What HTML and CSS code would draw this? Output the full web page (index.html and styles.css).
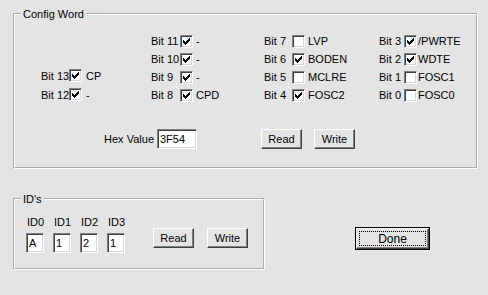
FILE: index.html
```html
<!DOCTYPE html>
<html lang="en">
<head>
    <meta charset="UTF-8">
    <meta name="viewport" content="width=device-width, initial-scale=1.0">
    <title>Config Word</title>
    <link rel="stylesheet" href="styles.css">
</head>
<body>
    <svg class="sprite" xmlns="http://www.w3.org/2000/svg">
        <symbol id="tick" viewBox="0 0 11 11">
            <rect x="2" y="4" width="1" height="3"/>
            <rect x="3" y="5" width="1" height="3"/>
            <rect x="4" y="6" width="1" height="3"/>
            <rect x="5" y="5" width="1" height="3"/>
            <rect x="6" y="4" width="1" height="3"/>
            <rect x="7" y="3" width="1" height="3"/>
            <rect x="8" y="2" width="1" height="3"/>
        </symbol>
    </svg>

    <div class="dialog">
        <fieldset class="group config">
            <legend>Config Word</legend>
            <div class="bits">
                <div class="bit-col col-a">
                    <div class="bit"><span class="bit-name">Bit 13</span><span class="box"><svg><use href="#tick"/></svg></span><span class="bit-label">CP</span></div>
                    <div class="bit"><span class="bit-name">Bit 12</span><span class="box"><svg><use href="#tick"/></svg></span><span class="bit-label">-</span></div>
                </div>
                <div class="bit-col col-b">
                    <div class="bit"><span class="bit-name">Bit 11</span><span class="box"><svg><use href="#tick"/></svg></span><span class="bit-label">-</span></div>
                    <div class="bit"><span class="bit-name">Bit 10</span><span class="box"><svg><use href="#tick"/></svg></span><span class="bit-label">-</span></div>
                    <div class="bit"><span class="bit-name">Bit 9</span><span class="box"><svg><use href="#tick"/></svg></span><span class="bit-label">-</span></div>
                    <div class="bit"><span class="bit-name">Bit 8</span><span class="box"><svg><use href="#tick"/></svg></span><span class="bit-label">CPD</span></div>
                </div>
                <div class="bit-col col-c">
                    <div class="bit"><span class="bit-name">Bit 7</span><span class="box"></span><span class="bit-label">LVP</span></div>
                    <div class="bit"><span class="bit-name">Bit 6</span><span class="box"><svg><use href="#tick"/></svg></span><span class="bit-label">BODEN</span></div>
                    <div class="bit"><span class="bit-name">Bit 5</span><span class="box"></span><span class="bit-label">MCLRE</span></div>
                    <div class="bit"><span class="bit-name">Bit 4</span><span class="box"><svg><use href="#tick"/></svg></span><span class="bit-label">FOSC2</span></div>
                </div>
                <div class="bit-col col-d">
                    <div class="bit"><span class="bit-name">Bit 3</span><span class="box"><svg><use href="#tick"/></svg></span><span class="bit-label">/PWRTE</span></div>
                    <div class="bit"><span class="bit-name">Bit 2</span><span class="box"><svg><use href="#tick"/></svg></span><span class="bit-label">WDTE</span></div>
                    <div class="bit"><span class="bit-name">Bit 1</span><span class="box"></span><span class="bit-label">FOSC1</span></div>
                    <div class="bit"><span class="bit-name">Bit 0</span><span class="box"></span><span class="bit-label">FOSC0</span></div>
                </div>
            </div>
            <div class="hex-row">
                <span class="hex-label">Hex Value</span>
                <input class="field hex" type="text" value="3F54">
                <button class="btn hex-read">Read</button>
                <button class="btn btn-next">Write</button>
            </div>
        </fieldset>

        <div class="lower">
            <fieldset class="group ids">
                <legend>ID's</legend>
                <div class="id-row">
                    <div class="id-col"><span class="id-name">ID0</span><input class="field id" type="text" value="A"></div>
                    <div class="id-col"><span class="id-name">ID1</span><input class="field id" type="text" value="1"></div>
                    <div class="id-col"><span class="id-name">ID2</span><input class="field id" type="text" value="2"></div>
                    <div class="id-col"><span class="id-name">ID3</span><input class="field id" type="text" value="1"></div>
                    <button class="btn id-read">Read</button>
                    <button class="btn id-write">Write</button>
                </div>
            </fieldset>
            <button class="btn done"><span class="focus">Done</span></button>
        </div>
    </div>
</body>
</html>
```

FILE: styles.css
```css
body {
    margin: 0;
    background-color: #e4e4e4;
    font-family: "Liberation Sans", Arial, sans-serif;
    font-size: 11px;
    line-height: 12px;
    color: #000000;
}

.sprite {
    display: none;
}

.dialog {
    padding: 8px 0 0 13px;
}

/* etched group box */
.group {
    margin: 0;
    min-width: 0;
    border: 2px groove #ffffff;
    box-sizing: border-box;
}

.group legend {
    padding: 0 2px;
    margin-left: 6px;
    line-height: 12px;
}

.config {
    width: 465px;
    padding: 12px 0 18px 0;
}

.bits {
    display: grid;
    grid-template-columns: 110px 113px 115px 1fr;
    margin-left: 26px;
}

.bit {
    display: flex;
    align-items: center;
    height: 18px;
    white-space: nowrap;
}

.col-a {
    padding-top: 34px;
}
.col-a .bit {
    height: 19px;
}

.bit-name {
    width: 28px;
}
.col-b .bit-name {
    width: 29px;
}
.col-d .bit-name {
    width: 25px;
}

.box {
    width: 13px;
    height: 13px;
    box-sizing: border-box;
    background-color: #ffffff;
    border: 1px solid;
    border-color: #808080 #ffffff #ffffff #808080;
    box-shadow: inset 1px 1px 0 #404040, inset -1px -1px 0 #d8d8d8;
    margin-right: 3px;
}
.col-a .box {
    margin-right: 4px;
}
.col-d .box {
    margin-right: 1px;
}

.box svg {
    display: block;
    width: 11px;
    height: 11px;
    fill: #000000;
}

.hex-row {
    display: flex;
    align-items: center;
    margin-top: 25px;
    height: 20px;
}

.hex-label {
    width: 54px;
    margin-left: 85px;
    text-align: right;
}

.field {
    box-sizing: border-box;
    height: 20px;
    margin: 0;
    padding: 0 0 0 2px;
    font-family: inherit;
    font-size: 11px;
    color: #000000;
    background-color: #ffffff;
    border: 1px solid;
    border-color: #808080 #ffffff #ffffff #808080;
    box-shadow: inset 1px 1px 0 #404040, inset -1px -1px 0 #d8d8d8;
    outline: none;
}

.hex {
    width: 40px;
    margin-left: 3px;
}

.btn {
    box-sizing: border-box;
    width: 41px;
    height: 20px;
    margin: 0;
    padding: 0;
    font-family: inherit;
    font-size: 11px;
    color: #000000;
    background-color: #e4e4e4;
    border: 1px solid;
    border-color: #ffffff #404040 #404040 #ffffff;
    box-shadow: inset -1px -1px 0 #808080;
}

.hex-read {
    margin-left: 64px;
}
.btn-next {
    margin-left: 12px;
}

.lower {
    display: flex;
    align-items: flex-start;
    margin-top: 24px;
}

.ids {
    width: 252px;
    padding: 11px 0 15px 0;
}

.id-row {
    display: flex;
    align-items: flex-start;
    margin-left: 11px;
}

.id-col {
    display: flex;
    flex-direction: column;
    width: 18px;
    margin-right: 9px;
    white-space: nowrap;
}

.id-name {
    padding-left: 1px;
    margin-bottom: 5px;
}

.id {
    width: 18px;
}

.id-read {
    margin-left: 19px;
    margin-top: 12px;
}
.id-write {
    margin-left: 13px;
    margin-top: 12px;
}

.done {
    display: flex;
    width: 73px;
    height: 21px;
    padding: 2px;
    margin-left: 91px;
    margin-top: 35px;
    box-shadow: 0 0 0 1px #000000, inset -1px -1px 0 #808080;
}

.done .focus {
    flex: 1;
    display: flex;
    align-items: center;
    justify-content: center;
    border: 1px dotted #000000;
    font-size: 12px;
}
```
